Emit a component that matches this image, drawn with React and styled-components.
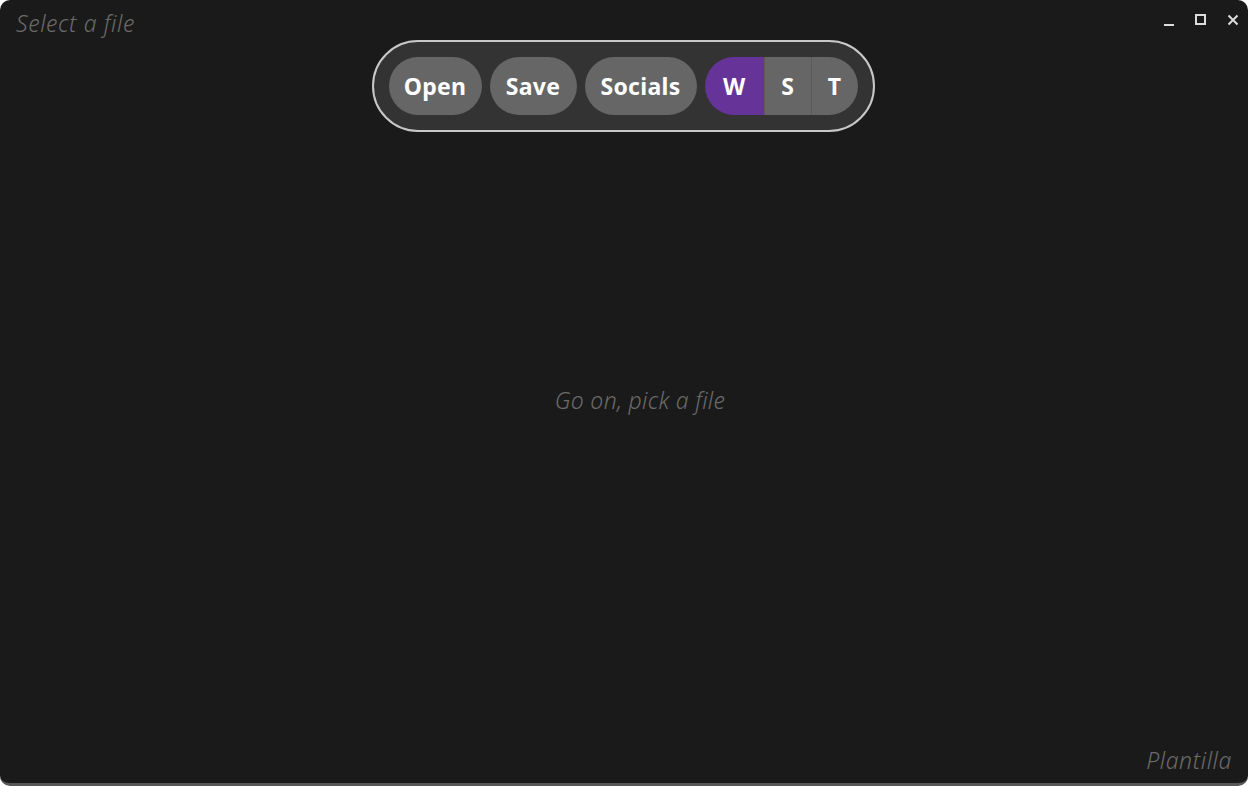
import styled, { createGlobalStyle } from 'styled-components'

const GlobalStyle = createGlobalStyle`
  html, body {
    margin: 0;
    padding: 0;
    background: #ffffff;
  }
  * {
    box-sizing: border-box;
  }
`

const Window = styled.div`
  width: 1248px;
  height: 786px;
  display: grid;
  grid-template-rows: 40px auto 1fr auto;
  background: #1a1a1a;
  border-radius: 10px;
  border-bottom: 3px solid #565656;
  font-family: 'Noto Sans', 'Open Sans', sans-serif;
  overflow: hidden;
`

const TitleBar = styled.div`
  display: flex;
  align-items: flex-start;
  justify-content: space-between;
  padding: 8px 5px 0 16px;
`

const Title = styled.div`
  font-size: 23px;
  font-weight: 300;
  font-style: italic;
  letter-spacing: 0.6px;
  color: #6a6a6a;
  line-height: 30px;
`

const Controls = styled.div`
  display: flex;
  gap: 12px;
  padding-top: 2px;
`

const ControlButton = styled.button`
  width: 20px;
  height: 20px;
  padding: 0;
  border: none;
  background: none;
  display: flex;
  align-items: center;
  justify-content: center;
  color: #dcdcdc;
`

const ToolbarRow = styled.div`
  display: flex;
  justify-content: center;
`

const Toolbar = styled.div`
  display: flex;
  align-items: center;
  gap: 8px;
  padding: 15px;
  background: #333333;
  border: 2px solid #c8c8c8;
  border-radius: 46px;
  margin-left: -2px;
`

const Pill = styled.button`
  width: ${({ $w }) => $w}px;
  height: 58px;
  padding: 0 0 1px;
  border: none;
  border-radius: 29px;
  background: #666666;
  color: #ffffff;
  font-family: inherit;
  font-size: 23px;
  font-weight: 700;
  letter-spacing: 0.3px;
`

const Segmented = styled.div`
  display: flex;
  height: 58px;
  border-radius: 29px;
  overflow: hidden;
`

const Segment = styled.button`
  width: ${({ $w }) => $w}px;
  height: 58px;
  padding: 0 0 1px;
  border: none;
  border-left: ${({ $divider }) => ($divider ? '1px solid #5a5a5a' : 'none')};
  background: ${({ $active }) => ($active ? '#663399' : '#666666')};
  color: #ffffff;
  font-family: inherit;
  font-size: 23px;
  font-weight: 700;
`

const Main = styled.div`
  display: flex;
  align-items: center;
  justify-content: center;
  padding: 0 0 78px 32px;
`

const Hint = styled.div`
  font-size: 23px;
  font-weight: 300;
  font-style: italic;
  letter-spacing: 0.3px;
  color: #6a6a6a;
`

const Footer = styled.div`
  display: flex;
  justify-content: flex-end;
  padding: 0 16px 8px 0;
`

const Brand = styled.div`
  font-size: 23px;
  font-weight: 300;
  font-style: italic;
  letter-spacing: 0.6px;
  color: #6a6a6a;
  line-height: 30px;
`

function App() {
  return (
    <>
      <GlobalStyle />
      <Window>
        <TitleBar>
          <Title>Select a file</Title>
          <Controls>
            <ControlButton aria-label="minimize">
              <svg width="12" height="12" viewBox="0 0 12 12">
                <rect x="1" y="10" width="10" height="2" fill="currentColor" />
              </svg>
            </ControlButton>
            <ControlButton aria-label="maximize">
              <svg width="12" height="12" viewBox="0 0 12 12">
                <rect x="1" y="1" width="9" height="9" fill="none" stroke="currentColor" strokeWidth="2" />
              </svg>
            </ControlButton>
            <ControlButton aria-label="close">
              <svg width="12" height="12" viewBox="0 0 12 12">
                <path d="M1.5 1.5 L10.5 10.5 M10.5 1.5 L1.5 10.5" stroke="currentColor" strokeWidth="2" />
              </svg>
            </ControlButton>
          </Controls>
        </TitleBar>

        <ToolbarRow>
          <Toolbar>
            <Pill $w={93}>Open</Pill>
            <Pill $w={87}>Save</Pill>
            <Pill $w={112}>Socials</Pill>
            <Segmented>
              <Segment $w={59} $active>W</Segment>
              <Segment $w={47} $divider>S</Segment>
              <Segment $w={47} $divider>T</Segment>
            </Segmented>
          </Toolbar>
        </ToolbarRow>

        <Main>
          <Hint>Go on, pick a file</Hint>
        </Main>

        <Footer>
          <Brand>Plantilla</Brand>
        </Footer>
      </Window>
    </>
  )
}

export default App
